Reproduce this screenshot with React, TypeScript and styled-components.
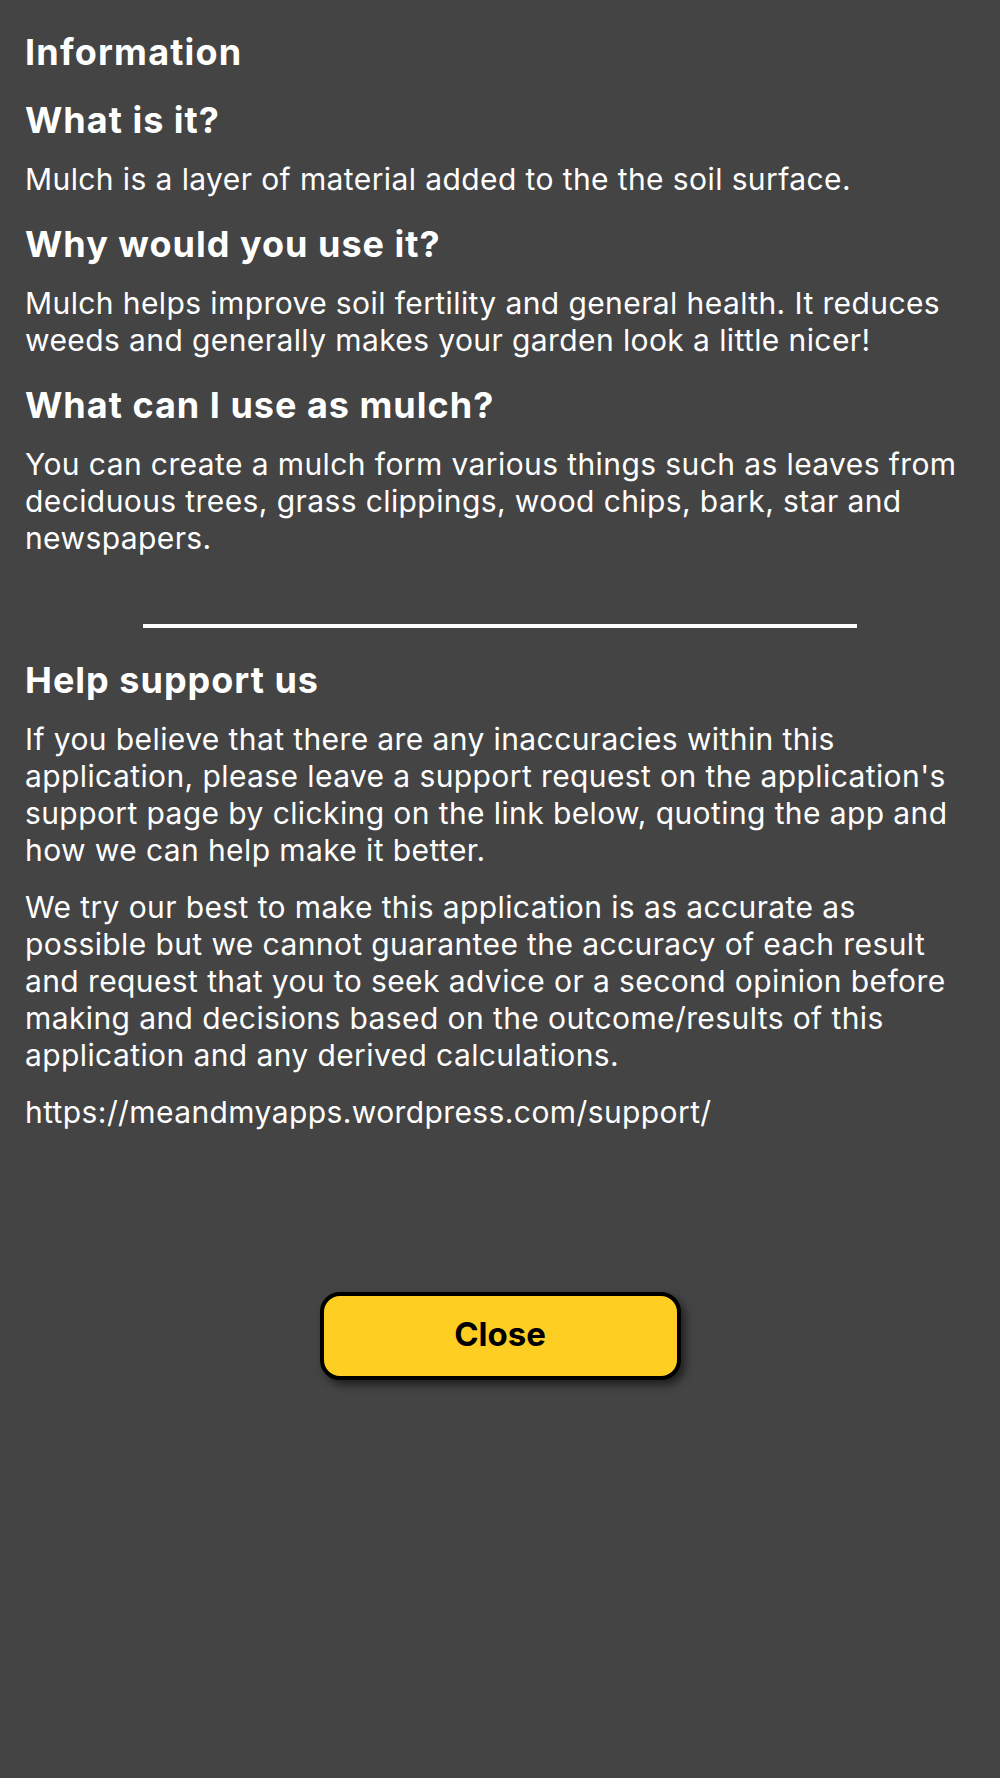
import * as React from 'react';
import styled, { createGlobalStyle } from 'styled-components';

const GlobalStyle = createGlobalStyle`
  html, body {
    margin: 0;
    padding: 0;
    background: #444444;
  }
  body {
    font-family: "Inter", "Noto Sans", sans-serif;
    color: #ffffff;
  }
`;

const Page = styled.div`
  min-height: 1778px;
  box-sizing: border-box;
  padding: 30px 25px;
  display: flex;
  flex-direction: column;
`;

const Title = styled.h1`
  margin: 0 0 25px;
  font-size: 36px;
  line-height: 44px;
  letter-spacing: 1.2px;
  font-weight: 700;
`;

const Section = styled.section`
  & + & {
    margin-top: 5px;
  }
`;

const Heading = styled.h2`
  margin: 0 0 20px;
  font-size: 36px;
  line-height: 42px;
  letter-spacing: 1px;
  font-weight: 700;
`;

const Text = styled.p`
  margin: 0 0 20px;
  font-size: 30px;
  line-height: 37px;
  letter-spacing: 0.4px;
  font-weight: 400;
`;

const Divider = styled.hr`
  width: 714px;
  height: 4px;
  border: none;
  background: #ffffff;
  margin: 47px auto 31px;
`;

const ButtonRow = styled.div`
  display: flex;
  justify-content: center;
  margin-top: 141px;
`;

const CloseButton = styled.button`
  width: 361px;
  height: 88px;
  box-sizing: border-box;
  padding: 0 0 5px;
  border: 4px solid #000000;
  border-radius: 20px;
  background: #ffce23;
  color: #000000;
  font-family: "Inter", "Noto Sans", sans-serif;
  font-size: 33px;
  font-weight: 700;
  box-shadow: 4px 5px 8px rgba(0, 0, 0, 0.55);
  cursor: pointer;
`;

const sections = [
  {
    title: "What is it?",
    body: ["Mulch is a layer of material added to the the soil surface."],
  },
  {
    title: "Why would you use it?",
    body: ["Mulch helps improve soil fertility and general health. It reduces weeds and generally makes your garden look a little nicer!"],
  },
  {
    title: "What can I use as mulch?",
    body: ["You can create a mulch form various things such as leaves from deciduous trees, grass clippings, wood chips, bark, star and newspapers."],
  },
];

const support = [
  "If you believe that there are any inaccuracies within this application, please leave a support request on the application's support page by clicking on the link below, quoting the app and how we can help make it better.",
  "We try our best to make this application is as accurate as possible but we cannot guarantee the accuracy of each result and request that you to seek advice or a second opinion before making and decisions based on the outcome/results of this application and any derived calculations.",
  "https://meandmyapps.wordpress.com/support/",
];

export default function App() {
  return (
    <>
      <GlobalStyle />
      <Page>
        <Title>Information</Title>
        {sections.map((s) => (
          <Section key={s.title}>
            <Heading>{s.title}</Heading>
            {s.body.map((b, i) => <Text key={i}>{b}</Text>)}
          </Section>
        ))}
        <Divider />
        <Section>
          <Heading>Help support us</Heading>
          {support.map((b, i) => <Text key={i}>{b}</Text>)}
        </Section>
        <ButtonRow>
          <CloseButton>Close</CloseButton>
        </ButtonRow>
      </Page>
    </>
  );
}
